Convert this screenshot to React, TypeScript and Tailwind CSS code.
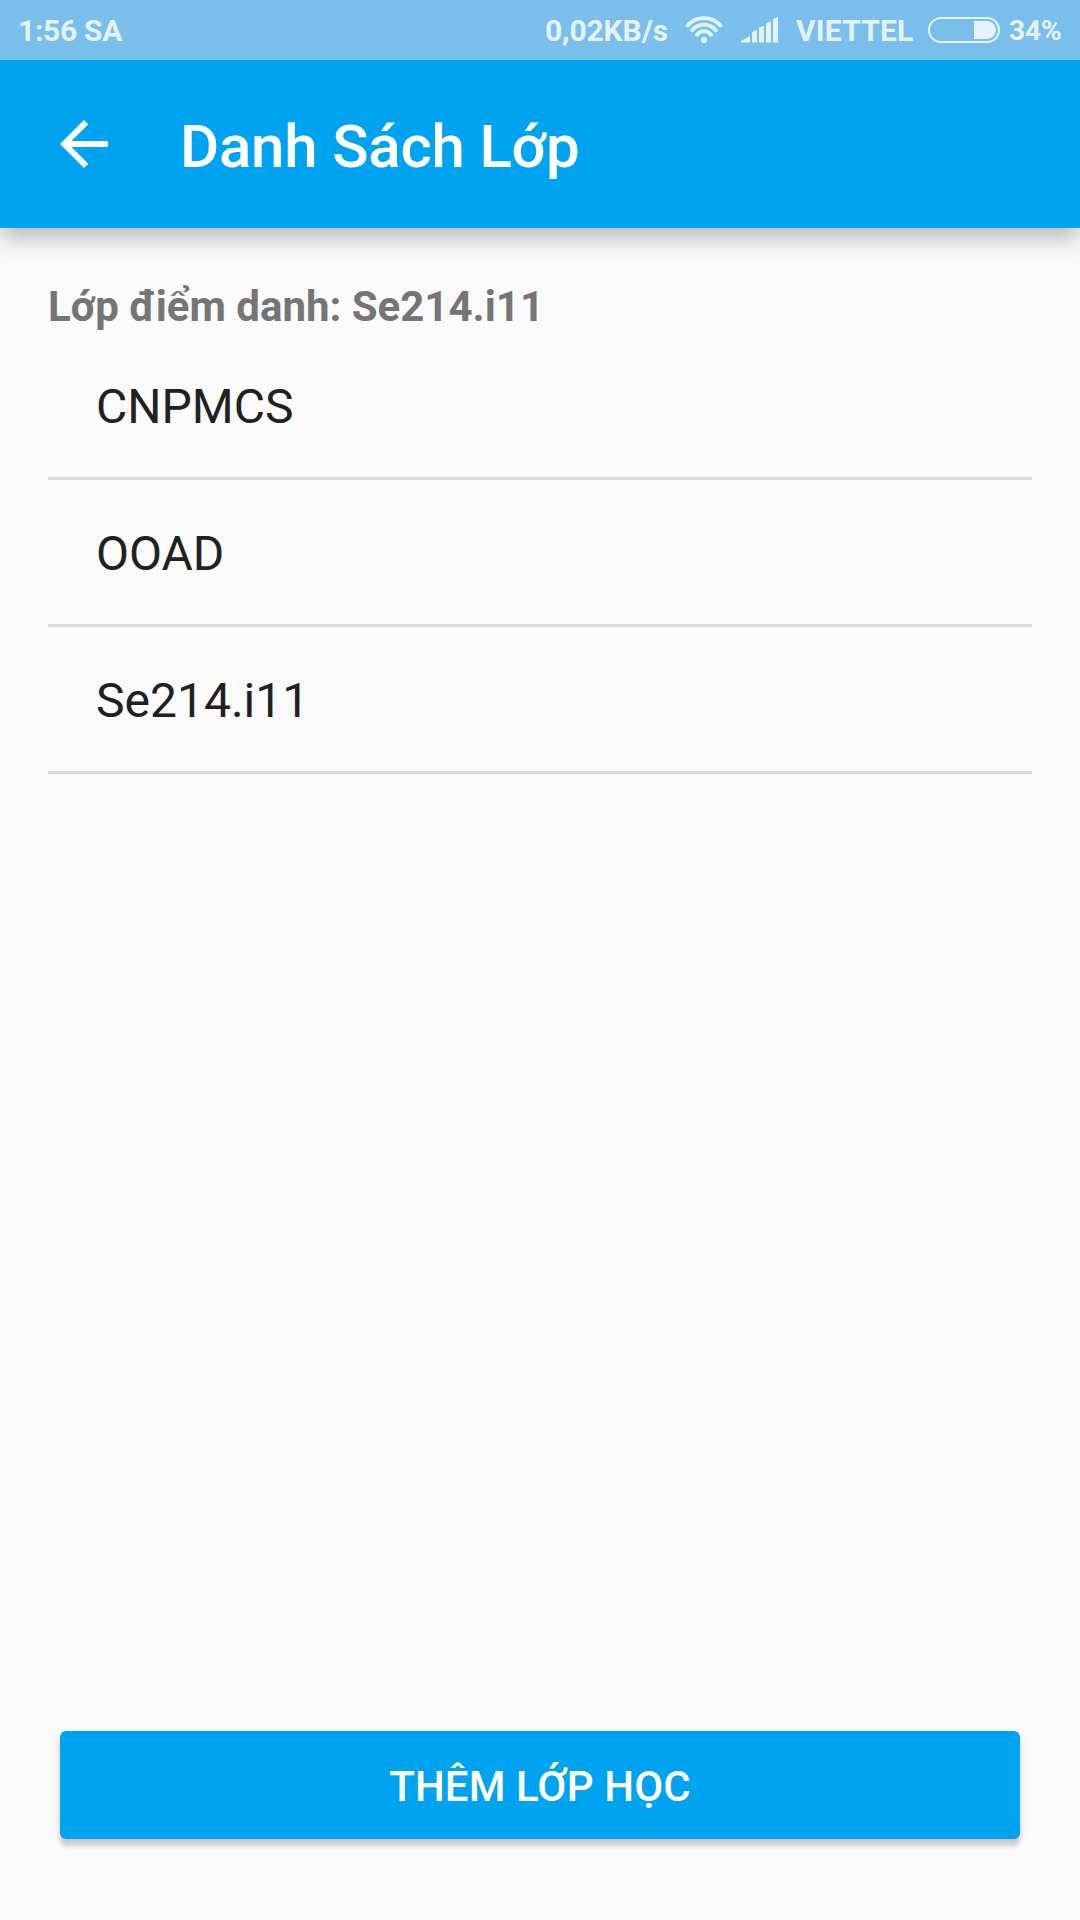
export default function App() {
  const rows = ['CNPMCS', 'OOAD', 'Se214.i11'];
  return (
    <div className="flex h-[1920px] w-[1080px] flex-col bg-[#fafafa] font-['Roboto',sans-serif]">
      <div className="relative z-10 flex h-[60px] shrink-0 items-center justify-between bg-[#7abfec] pr-[18px] pl-[18px] text-[30px] leading-[36px] font-bold text-[#e4f2fb]">
        <span className="pt-[2px] tracking-[-0.3px]">1:56 SA</span>
        <div className="flex items-center whitespace-nowrap">
          <span className="w-[140px] pt-[2px] tracking-[-0.1px]">0,02KB/s</span>
          <svg width="38" height="28" viewBox="0 0 38 28" fill="none" stroke="currentColor" strokeWidth="3.8">
            <path d="M1.5 10.7A22 22 0 0 1 36.5 10.7M6.2 15.6A15.3 15.3 0 0 1 31.8 15.6M11.2 20.1A8.7 8.7 0 0 1 26.8 20.1" />
            <circle cx="19" cy="24" r="3.1" fill="currentColor" stroke="none" />
          </svg>
          <svg className="ml-[18px]" width="37" height="26" viewBox="0 0 37 26" fill="currentColor">
            <path d="M0 25.5V24l9-5v6.500zM11 25.500V15l5-2v12.500zM18 25.500V10.500l5-2v17zM25 25.500V6.500l5-2v21zM32 25.500V2l5-2v25.500z" />
          </svg>
          <span className="ml-[18px] w-[132px] pt-[2px] tracking-[0.2px]">VIETTEL</span>
          <div className="flex h-[26px] w-[72px] justify-end rounded-full border-2 border-[#e4f2fb] p-[2px]">
            <div className="w-[22px] rounded-r-full bg-[#e4f2fb]" />
          </div>
          <span className="ml-[9px] w-[53px] pt-[2px] text-[28px] tracking-[-0.1px]">34%</span>
        </div>
      </div>
      <header className="flex h-[168px] shrink-0 items-center bg-[#00a3f0] pl-[60px] text-white shadow-[0_10px_22px_rgba(0,0,0,0.26)]">
        <svg width="48" height="48" viewBox="4 4 16 16" fill="currentColor">
          <path d="M20 11H7.83l5.59-5.59L12 4l-8 8 8 8 1.41-1.41L7.83 13H20z" />
        </svg>
        <h1 className="ml-[72px] pt-[5px] text-[60px] font-medium tracking-[-0.2px]">Danh Sách Lớp</h1>
      </header>
      <main className="flex flex-1 flex-col px-12 pt-[50px]">
        <h2 className="h-[55px] text-[42px] leading-[58px] font-bold text-[#757575]">Lớp điểm danh: Se214.i11</h2>
        <ul>
          {rows.map((r) => (
            <li key={r} className="flex h-[147px] items-center border-b-3 border-[#dadada] pt-[3px] pl-12 text-[48px] text-[#212121]">{r}</li>
          ))}
        </ul>
        <button className="mx-3 mt-auto mb-[81px] h-[108px] rounded-[6px] bg-[#00a3f0] pt-[3px] text-[42px] font-medium tracking-[0.1px] text-white shadow-[0_7px_4px_rgba(0,0,0,0.16),0_2px_10px_rgba(0,0,0,0.08)]">THÊM LỚP HỌC</button>
      </main>
    </div>
  );
}
